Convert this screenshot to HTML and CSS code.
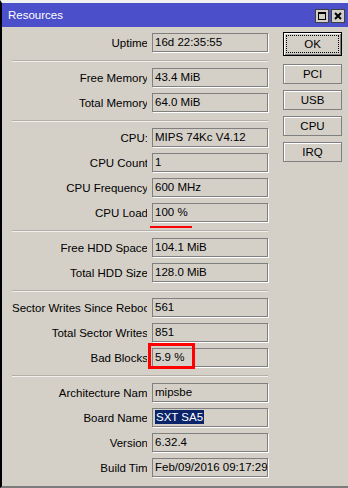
FILE: index.html
```html
<!DOCTYPE html>
<html lang="en">
<head>
  <meta charset="UTF-8" />
  <meta name="viewport" content="width=device-width, initial-scale=1.0" />
  <title>Resources</title>
  <link rel="stylesheet" href="styles.css">
</head>
<body>
  <div class="window">
    <div class="titlebar">
      <span class="title">Resources</span>
      <div class="win-btns">
        <span class="win-btn"><span class="restore-icon"></span></span>
        <span class="win-btn">
          <svg width="8" height="8" viewBox="0 0 8 8"><path d="M1 1 L7 7 M7 1 L1 7" stroke="#000" stroke-width="2" /></svg>
        </span>
      </div>
    </div>

    <div class="body">
      <div class="form">
        <div class="group">
          <div class="row"><div class="label"><span>Uptime</span></div><div class="field">16d 22:35:55</div></div>
        </div>
        <div class="sep"></div>
        <div class="group">
          <div class="row"><div class="label"><span>Free Memory</span></div><div class="field">43.4 MiB</div></div>
          <div class="row"><div class="label"><span>Total Memory</span></div><div class="field">64.0 MiB</div></div>
        </div>
        <div class="sep"></div>
        <div class="group">
          <div class="row"><div class="label"><span>CPU:</span></div><div class="field">MIPS 74Kc V4.12</div></div>
          <div class="row"><div class="label"><span>CPU Count</span></div><div class="field">1</div></div>
          <div class="row"><div class="label"><span>CPU Frequency</span></div><div class="field">600 MHz</div></div>
          <div class="row"><div class="label"><span>CPU Load</span></div><div class="field">100 %</div></div>
        </div>
        <div class="sep"></div>
        <div class="group">
          <div class="row"><div class="label"><span>Free HDD Space</span></div><div class="field">104.1 MiB</div></div>
          <div class="row"><div class="label"><span>Total HDD Size</span></div><div class="field">128.0 MiB</div></div>
        </div>
        <div class="sep"></div>
        <div class="group">
          <div class="row"><div class="label"><span>Sector Writes Since Reboot</span></div><div class="field">561</div></div>
          <div class="row"><div class="label"><span>Total Sector Writes</span></div><div class="field">851</div></div>
          <div class="row"><div class="label"><span>Bad Blocks</span></div><div class="field">5.9 %</div></div>
        </div>
        <div class="sep"></div>
        <div class="group">
          <div class="row"><div class="label cut"><span>Architecture Name</span></div><div class="field">mipsbe</div></div>
          <div class="row"><div class="label"><span>Board Name</span></div><div class="field"><span class="selected">SXT SA5</span></div></div>
          <div class="row"><div class="label"><span>Version</span></div><div class="field">6.32.4</div></div>
          <div class="row"><div class="label cut"><span>Build Time</span></div><div class="field">Feb/09/2016 09:17:29</div></div>
        </div>
      </div>

      <div class="buttons">
        <div class="btn btn-default">OK</div>
        <div class="btn">PCI</div>
        <div class="btn">USB</div>
        <div class="btn">CPU</div>
        <div class="btn">IRQ</div>
      </div>
    </div>
  </div>

  <div class="mark-line"></div>
  <div class="mark-box"></div>
</body>
</html>
```

FILE: styles.css
```css
body {
  margin: 0;
  font-family: "Liberation Sans", Arial, sans-serif;
  font-size: 11.5px;
  color: #000;
  background: #d4d0c8;
}
.window {
  height: 488px;
  box-sizing: border-box;
  border-top: 3px solid #f1f1f1;
  border-left: 2px solid #000;
  border-bottom: 2px solid #7c7c7c;
  background: #d4d0c8;
}
.titlebar {
  height: 24px;
  background: #4b4fc9;
  color: #fff;
  display: flex;
  align-items: flex-start;
  justify-content: space-between;
  padding: 0 3px 0 6px;
}
.title {
  line-height: 24px;
}
.win-btns {
  display: flex;
  gap: 2px;
  margin-top: 6px;
}
.win-btn {
  width: 14px;
  height: 14px;
  box-sizing: border-box;
  background: #d4d0c8;
  border: 1px solid #404040;
  display: flex;
  align-items: center;
  justify-content: center;
}
.restore-icon {
  width: 8px;
  height: 8px;
  box-sizing: border-box;
  border: 1px solid #000;
  border-top-width: 2px;
}
.body {
  display: flex;
  padding: 5px 0 0 10px;
}
.form {
  width: 256px;
  margin-top: 1px;
}
.group {
  display: flex;
  flex-direction: column;
  gap: 6px;
}
.row {
  display: flex;
  align-items: center;
  gap: 5px;
  height: 19px;
}
.label {
  width: 135px;
  overflow: hidden;
}
.label span {
  display: block;
  width: 136px;
  text-align: right;
  white-space: nowrap;
}
.label.cut span {
  width: 142px;
}
.field {
  width: 116px;
  height: 19px;
  box-sizing: border-box;
  border: 1px solid #808080;
  box-shadow: 1px 1px 0 #fff;
  padding-left: 2px;
  line-height: 17px;
  white-space: nowrap;
  overflow: hidden;
}
.selected {
  background: #0a246a;
  color: #fff;
  padding: 1px 1px;
}
.sep {
  border-top: 1px solid #b3afa6;
  border-bottom: 1px solid #f2f1ed;
  margin: 8px 0 6px;
}
.buttons {
  margin-left: 15px;
  width: 59px;
  display: flex;
  flex-direction: column;
  gap: 6px;
}
.btn {
  height: 20px;
  box-sizing: border-box;
  border: 1px solid #808080;
  box-shadow: inset 1px 1px 0 #fff;
  text-align: center;
  line-height: 18px;
}
.btn-default {
  position: relative;
  height: 24px;
  line-height: 22px;
  margin-bottom: 2px;
  border-color: #000;
  box-shadow: inset 1px 1px 0 #fff, inset -1px -1px 0 #808080;
}
.btn-default::after {
  content: "";
  position: absolute;
  inset: 2px;
  border: 1px dotted #000;
}
.mark-line {
  position: absolute;
  left: 150px;
  top: 226px;
  width: 42px;
  height: 2px;
  background: #f00;
}
.mark-box {
  position: absolute;
  left: 148px;
  top: 343px;
  width: 41px;
  height: 20px;
  border: 3px solid #f00;
}
```
